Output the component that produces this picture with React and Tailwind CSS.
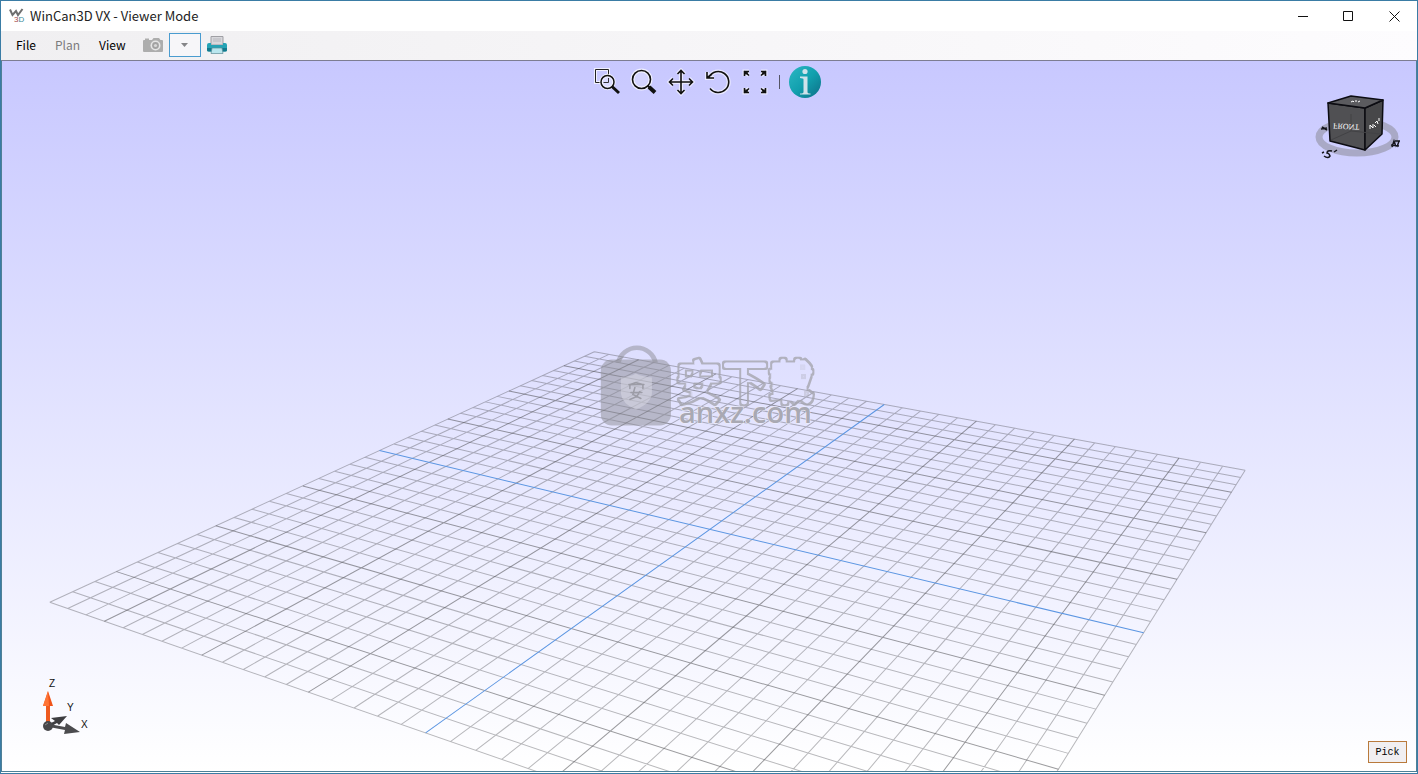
import React, { useState } from 'react';

// Perspective of the ground plane, u and v run from -1 to 1
const project = (u, v) => {
  const w = 1 - 0.13528 * u + 0.2397 * v;
  const x = (709.9 + 278.47 * u + 385.99 * v) / w;
  const y = (528.69 + 17.81 * u - 27.85 * v) / w;
  return [x - 2, y - 61];
};

const CELLS = 18;
const steps = Array.from({ length: CELLS * 2 + 1 }, (_, i) => i - CELLS);

const linePath = (step, along) => {
  const t = step / CELLS;
  const [x1, y1] = along === 'u' ? project(-1, t) : project(t, -1);
  const [x2, y2] = along === 'u' ? project(1, t) : project(t, 1);
  return `M${x1.toFixed(1)} ${y1.toFixed(1)}L${x2.toFixed(1)} ${y2.toFixed(1)}`;
};

const gridPath = (filter) =>
  steps
    .filter(filter)
    .map((s) => linePath(s, 'u') + linePath(s, 'v'))
    .join('');

const minorLines = gridPath((s) => s % 5 !== 0);
const majorLines = gridPath((s) => s % 5 === 0 && s !== 0);
const axisLines = gridPath((s) => s === 0);

const Scene = () => (
  <svg
    viewBox="0 0 1414 709"
    preserveAspectRatio="xMidYMid slice"
    className="absolute inset-0 h-full w-full"
    aria-hidden="true"
  >
    <g fill="none" strokeWidth="1">
      <path d={minorLines} stroke="#505054" strokeOpacity="0.4" />
      <path d={majorLines} stroke="#48484c" strokeOpacity="0.54" />
      <path d={axisLines} stroke="#5c96e2" />
    </g>
    <Watermark />
  </svg>
);

const Watermark = () => (
  <g>
    <defs>
      {/* keeps only the rim of the fattened characters */}
      <filter id="rim" x="-5%" y="-5%" width="110%" height="110%">
        <feMorphology in="SourceGraphic" operator="erode" radius="2" result="inner" />
        <feComposite in="SourceGraphic" in2="inner" operator="out" />
      </filter>
    </defs>
    <g fill="#8c8c94" fillOpacity="0.5">
      <path d="M614 301a21.500 21.500 0 0 1 42 0h-5a16.500 16.500 0 0 0-32 0z" />
      <rect x="599" y="298" width="70" height="66" rx="11" />
    </g>
    <path
      d="M619 316q10-1 15-4q6 3 16 4v16q-1 10-16 16q-14-6-15-16z"
      fill="#dcdce8"
      fillOpacity="0.5"
    />
    <g fill="none" stroke="#9c9ca6" strokeWidth="1.500" strokeLinecap="round">
      <path d="M627 323h15M628 327v-4l6-2 7 2v4M629 331h11M633 326l-2 7 8 4M638 330l-3 5-7 3" />
    </g>
    <text
      x="674"
      y="338"
      className="font-['Noto_Sans_CJK_SC',sans-serif] text-[46px] font-medium"
      fill="#a6a6af"
      stroke="#a6a6af"
      strokeWidth="5"
      strokeLinejoin="round"
      opacity="0.8"
      filter="url(#rim)"
    >
      安下载
    </text>
    <text
      x="677"
      y="361"
      className="font-['Open_Sans',sans-serif] text-[29px] font-semibold"
      fill="#a9a9b3"
      stroke="#efeffc"
      strokeWidth="1"
      paintOrder="stroke"
    >
      anxz.com
    </text>
  </g>
);

const AppIcon = () => (
  <svg width="16" height="16" viewBox="0 0 16 16" aria-hidden="true">
    <path d="M1 1.500l2.500 5.500L7 3l2 4L13.500 1" fill="none" stroke="#6e6e6e" strokeWidth="2" />
    <text x="5" y="14" fontSize="8" className="font-['Liberation_Sans',sans-serif]" fill="#a04848">
      3<tspan fill="#3d8a99">D</tspan>
    </text>
  </svg>
);

const CameraIcon = () => (
  <svg width="20" height="16" viewBox="0 0 20 16" aria-hidden="true">
    <path
      d="M1 3h1V1.500h4V3h3l1.500-2h5.500L17.500 3H19q1 0 1 1v10q0 1-1 1H1q-1 0-1-1V4q0-1 1-1z"
      fill="#adadad"
    />
    <circle cx="12.500" cy="8.500" r="5" fill="#e6e6e6" />
    <circle cx="12.500" cy="8.500" r="3.400" fill="#a2a2a2" />
    <circle cx="12.500" cy="8.500" r="1.600" fill="#d8d8d8" />
  </svg>
);

const PrinterIcon = () => (
  <svg width="20" height="18" viewBox="0 0 20 18" aria-hidden="true">
    <path d="M4 0.500h12V9H4z" fill="#d8d8dc" stroke="#9f9fa4" />
    <path d="M6 3h8M6 5h8" stroke="#b8b8be" />
    <path d="M2 7h2v2h12V7h2q2 0 2 2v5q0 1.500-2 1.500H2Q0 15.500 0 14V9q0-2 2-2z" fill="#25a3b5" />
    <path d="M0 12h20v2q0 1.500-2 1.500H2Q0 15.500 0 14z" fill="#13798c" />
    <path d="M5 12h10l1 5.500H4z" fill="#b9e6ee" stroke="#5d8d97" strokeWidth="0.700" />
  </svg>
);

// Every glyph of the view toolbar has a thin white halo under the black strokes
const Glyph = ({ children }) => (
  <svg width="28" height="28" viewBox="0 0 28 28" aria-hidden="true">
    <g fill="none" stroke="#fff" strokeOpacity="0.6" strokeWidth="4">{children}</g>
    <g fill="none" stroke="#111" strokeWidth="1.600">{children}</g>
  </svg>
);

const ZoomWindowIcon = () => (
  <svg width="28" height="28" viewBox="0 0 28 28" fill="none" aria-hidden="true">
    <path d="M8 14.500H2.500v-13h13V7" stroke="#fff" strokeOpacity="0.7" strokeWidth="3" />
    <path d="M8 14.500H2.500v-13h13V7" stroke="#222" />
    <circle cx="14.500" cy="14" r="6.500" fill="#dcdcff" stroke="#fff" strokeOpacity="0.7" strokeWidth="3.500" />
    <circle cx="14.500" cy="14" r="6.500" stroke="#111" strokeWidth="1.500" />
    <path d="M10.500 14.500h5V10" stroke="#333" />
    <path d="M19 18.500l7 6.500" stroke="#111" strokeWidth="3" />
  </svg>
);

const ZoomIcon = () => (
  <svg width="28" height="28" viewBox="0 0 28 28" fill="none" aria-hidden="true">
    <circle cx="11.500" cy="11.500" r="9" fill="#d4d4ff" stroke="#fff" strokeOpacity="0.7" strokeWidth="4" />
    <circle cx="11.500" cy="11.500" r="9" stroke="#111" strokeWidth="1.600" />
    <path d="M17.500 17.500l2 2" stroke="#111" strokeWidth="2" />
    <path d="M19 19l6 5.500" stroke="#111" strokeWidth="4" />
  </svg>
);

const PanIcon = () => (
  <Glyph>
    <path d="M14 3v22M3 14h22M10.500 6L14 2.500 17.500 6M10.500 22l3.500 3.500 3.500-3.500M6 10.500L2.500 14 6 17.500M22 10.500l3.500 3.500-3.500 3.500" />
  </Glyph>
);

const RotateIcon = () => (
  <Glyph>
    <path d="M5 9A10.500 10.500 0 1 1 6 20.500M3 4v6h7M3.500 9.500L8 6" />
  </Glyph>
);

const FitIcon = () => (
  <Glyph>
    <path d="M3.500 8V3.500H8M3 3l5 4.500M20 3.500h4.500V8M25 3l-5 4.500M3.500 20v4.500H8M3 25l5-4.500M24.500 20v4.500H20M25 25l-5-4.500" />
    <path d="M5 6.500V5h2M23 6.500V5h-2M5 21.500V23h2M23 21.500V23h-2" />
  </Glyph>
);

const InfoIcon = () => (
  <svg width="34" height="34" viewBox="0 0 34 34" aria-hidden="true">
    <defs>
      <linearGradient id="info" x1="0" y1="0" x2="1" y2="1">
        <stop offset="0" stopColor="#2cb7c3" />
        <stop offset="0.500" stopColor="#12a0ae" />
        <stop offset="1" stopColor="#0d6f86" />
      </linearGradient>
    </defs>
    <circle cx="17" cy="17" r="16" fill="url(#info)" />
    <circle cx="17" cy="6.500" r="2.600" fill="#cfe2ea" />
    <path d="M12 11.500h7.500V27q0 1.500 3 1.500v1H12v-1q3.500 0 3.500-1.500V14.500q0-1.500-3.500-1.500z" fill="#cfe2ea" />
  </svg>
);

const ViewCube = () => (
  <svg width="92" height="72" viewBox="0 0 92 72" aria-hidden="true">
    <ellipse cx="45" cy="47" rx="38" ry="16" fill="none" stroke="#a9a9c6" strokeWidth="7" />
    <g stroke="#0c0c12" strokeWidth="1.500" strokeLinejoin="round">
      <path d="M16 13l37 5v42l-35-9z" fill="#505053" />
      <path d="M53 18l18-8-1 34-17 16z" fill="#474749" />
      <path d="M16 13l23-7 32 4-18 8z" fill="#5b5b5f" />
    </g>
    <path d="M39 24v17l-20 9M39 41l30 3" fill="none" stroke="#424245" />
    <text
      x="23"
      y="-32"
      transform="rotate(3) scale(1 -1)"
      className="font-['Liberation_Serif',serif] text-[8px]"
      fill="#fff"
    >
      FRONT
    </text>
    <g fill="none" stroke="#fff">
      <path d="M58 39v-4l3 3v-4M62 35l2 2M63 33l2-2 1 3M67 31v-3" />
      <path d="M39 12l2-1 1 1M43 11h2M46 12l2-1" />
    </g>
    <g fill="none" stroke="#15151c" strokeWidth="1.500">
      <path d="M12 66q4 3 6 0q-1-3-3-3q0-3 5-2M10 63l2-1M22 62l3-2" />
      <path d="M79 55l8 1M80 57l2-6 2 6M85 57l2-6M83 51h5" />
      <path d="M10 37l5 3M9 39l6-1" />
    </g>
  </svg>
);

const AxisTriad = () => (
  <svg width="52" height="62" viewBox="0 0 52 62" aria-label="Axes">
    <path d="M7 26h4v21H7z" fill="#ee5a20" />
    <path d="M9 12l5 15H4z" fill="#f0541a" />
    <path d="M9 12l1 15H4z" fill="#ff7436" />
    <path d="M10 45l6-3-4-3 16-2-8 9-2-2-7 4z" fill="#3d3d40" />
    <path d="M10 45l16 3 1-4 14 9-16 2 1-4-16-3z" fill="#4b4b4e" />
    <circle cx="9" cy="47" r="5" fill="#47474a" />
    <path d="M6 46l3-2" stroke="#8a8a8c" />
    <g className="font-['Liberation_Sans',sans-serif] text-[10px]" fill="#111">
      <text x="10" y="8">Z</text>
      <text x="28" y="32">Y</text>
      <text x="42" y="49">X</text>
    </g>
  </svg>
);

const tools = [
  { name: 'Zoom window', Icon: ZoomWindowIcon },
  { name: 'Zoom', Icon: ZoomIcon },
  { name: 'Pan', Icon: PanIcon },
  { name: 'Rotate', Icon: RotateIcon },
  { name: 'Zoom to fit', Icon: FitIcon },
];

const TitleBar = () => (
  <header className="flex h-[30px] shrink-0 items-center bg-white pl-2">
    <AppIcon />
    <h1 className="ml-[5px] text-[13px] leading-4 text-[#222]">WinCan3D VX - Viewer Mode</h1>
    <div className="ml-auto flex h-full">
      <button type="button" aria-label="Minimize" className="flex w-[45px] items-center justify-center">
        <svg width="11" height="11" aria-hidden="true"><path d="M0 5.500h10" stroke="#111" /></svg>
      </button>
      <button type="button" aria-label="Maximize" className="flex w-[45px] items-center justify-center">
        <svg width="11" height="11" aria-hidden="true"><path d="M.5.5h9v9h-9z" fill="none" stroke="#111" /></svg>
      </button>
      <button type="button" aria-label="Close" className="flex w-[46px] items-center justify-center">
        <svg width="11" height="11" aria-hidden="true"><path d="M.5.5l10 10M10.500.5l-10 10" stroke="#111" /></svg>
      </button>
    </div>
  </header>
);

const MenuBar = () => (
  <nav className="flex h-[30px] shrink-0 items-center border-b border-[#7d7d92] bg-linear-to-r from-[#f0eff1] to-[#fdfcfe] pb-0.5 pl-[15px] text-[12px] text-black">
    <button type="button" className="w-[39px] text-left">File</button>
    <button type="button" disabled className="w-11 text-left text-[#7b7b7d]">Plan</button>
    <button type="button" className="w-11 text-left">View</button>
    <button type="button" disabled aria-label="Snapshot"><CameraIcon /></button>
    <button
      type="button"
      aria-label="Snapshot options"
      className="ml-1.5 flex h-6 w-8 items-center justify-center border border-[#4a9cd0] bg-[#f7f6f9]"
    >
      <svg width="8" height="4" aria-hidden="true"><path d="M0 0h7l-3.500 4z" fill="#858588" /></svg>
    </button>
    <button type="button" aria-label="Print" className="ml-1.5"><PrinterIcon /></button>
  </nav>
);

const App = () => {
  const [activeTool, setActiveTool] = useState('');

  return (
    <div className="flex h-screen flex-col border border-[#3a7ca5] bg-white font-['Noto_Sans_CJK_SC','Noto_Sans',sans-serif]">
      <TitleBar />
      <MenuBar />
      <main className="relative mb-px flex-1 overflow-hidden border-x border-b border-[#4f8097] bg-linear-to-b from-[#c8c8ff] to-white">
        <Scene />
        <div className="absolute inset-x-0 top-1 flex items-center justify-center pr-1">
          <div className="flex gap-[9px]">
            {tools.map(({ name, Icon }) => (
              <button
                key={name}
                type="button"
                aria-label={name}
                aria-pressed={activeTool === name}
                onClick={() => setActiveTool(name)}
              >
                <Icon />
              </button>
            ))}
          </div>
          <span className="ml-2.5 h-3.5 w-px bg-[#555566]" />
          <button type="button" aria-label="Information" className="ml-2"><InfoIcon /></button>
        </div>
        <div className="absolute top-[29px] right-3"><ViewCube /></div>
        <div className="absolute bottom-[30px] left-[37px]"><AxisTriad /></div>
        <button
          type="button"
          className="absolute right-[9px] bottom-2 h-[22px] w-[39px] border border-[#b97a3c] bg-[#f1eff1] font-['Liberation_Mono',monospace] text-[10px] text-black"
        >
          Pick
        </button>
      </main>
    </div>
  );
};

export default App;
